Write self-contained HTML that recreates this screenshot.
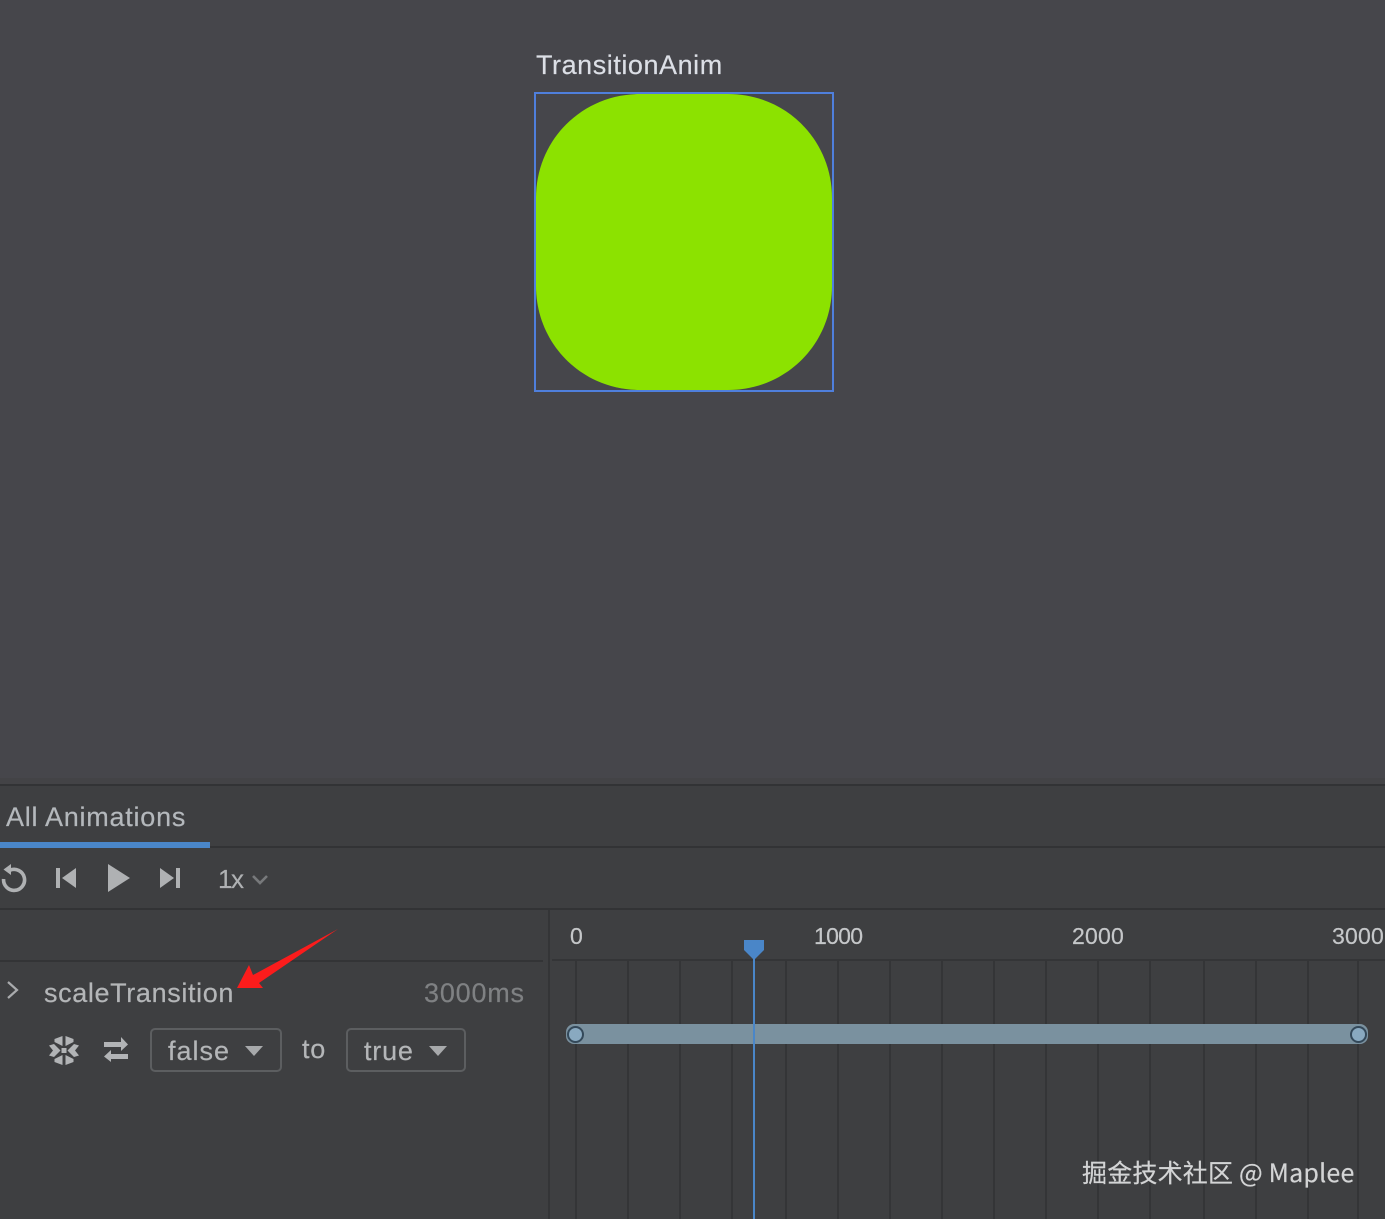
<!DOCTYPE html>
<html>
<head>
<meta charset="utf-8">
<style>
html,body{margin:0;padding:0;background:#46464b;}
#r{position:relative;width:1385px;height:1219px;overflow:hidden;background:#46464b;font-family:"Liberation Sans",sans-serif;}
.t{position:absolute;white-space:nowrap;line-height:1;-webkit-text-stroke:0.2px currentColor;}
.a{position:absolute;}
</style>
</head>
<body>
<div id="r">
  <div class="t" style="left:536px;top:52px;font-size:27px;letter-spacing:0.55px;color:#dcdfe6;">TransitionAnim</div>
  <div class="a" style="left:534px;top:92px;width:296px;height:296px;border:2px solid #4f7fdc;"></div>
  <svg class="a" style="left:534px;top:92px" width="300" height="300" viewBox="0 0 300 300">
    <path d="M2 106C2 48 48 2 106 2H194C252 2 298 48 298 106V194C298 252 252 298 194 298H106C48 298 2 252 2 194Z" fill="#8ce200"/>
  </svg>

  <div class="a" style="left:0;top:778px;width:1385px;height:441px;background:#3e3f41;"></div>
  <div class="a" style="left:0;top:778px;width:1385px;height:7px;background:#434346;"></div>
  <div class="a" style="left:0;top:784px;width:1385px;height:2px;background:#323335;"></div>
  <div class="a" style="left:0;top:846px;width:1385px;height:2px;background:#323335;"></div>
  <div class="a" style="left:0;top:842px;width:210px;height:6px;background:#4a86c8;"></div>
  <div class="a" style="left:0;top:908px;width:1385px;height:2px;background:#323335;"></div>
  <div class="a" style="left:548px;top:910px;width:2px;height:309px;background:#343537;"></div>
  <div class="a" style="left:0;top:960px;width:543px;height:2px;background:#333436;"></div>
  <div class="a" style="left:552px;top:959px;width:833px;height:2px;background:#343537;"></div>

  <div class="t" style="left:6px;top:804px;font-size:27px;letter-spacing:0.75px;color:#b4b8bc;">All Animations</div>

  <svg class="a" style="left:0;top:860px" width="280" height="40" viewBox="0 0 280 40">
    <path d="M10 10.200A10.500 10.500 0 1 1 3.600 19" fill="none" stroke="#afb1b3" stroke-width="3.600"/>
    <path d="M11 4V15L3.500 9.500Z" fill="#afb1b3"/>
    <rect x="56" y="8" width="4" height="20" fill="#afb1b3"/>
    <path d="M76 8V28L62 18Z" fill="#afb1b3"/>
    <path d="M108 4V32L130 18Z" fill="#afb1b3"/>
    <path d="M160 8V28L174 18Z" fill="#afb1b3"/>
    <rect x="176" y="8" width="4" height="20" fill="#afb1b3"/>
    <path d="M253 16L260 23L267 16" fill="none" stroke="#77797b" stroke-width="2.600"/>
  </svg>
  <div class="t" style="left:218px;top:866px;font-size:26px;letter-spacing:-1.500px;color:#afb1b3;">1x</div>

  <svg class="a" style="left:0;top:975px" width="30" height="30" viewBox="0 0 30 30">
    <path d="M8 7L17 15L8 23" fill="none" stroke="#a9abad" stroke-width="2.200"/>
  </svg>
  <div class="t" style="left:44px;top:980px;font-size:27px;letter-spacing:0.63px;color:#b4b6b8;">scaleTransition</div>
  <div class="t" style="left:424px;top:980px;font-size:27px;letter-spacing:0.8px;color:#7f8183;">3000ms</div>

  <svg class="a" style="left:40px;top:1025px" width="100" height="50" viewBox="0 0 100 50">
    <g fill="#b2b4b6">
      <rect x="21.500" y="23" width="5" height="5"/>
      <path d="M22.500 11V21L14.500 17V14Z"/>
      <path d="M25.500 11V21L33.500 17V14Z"/>
      <path d="M22.500 40V30L14.500 34V37Z"/>
      <path d="M25.500 40V30L33.500 34V37Z"/>
      <path d="M9 20.500L14 19L20.500 25.500L14 32L9 30.500L13 25.500Z"/>
      <path d="M39 20.500L34 19L27.500 25.500L34 32L39 30.500L35 25.500Z"/>
      <rect x="64" y="17" width="18" height="5"/>
      <path d="M81 12L88 19.500L81 26Z"/>
      <rect x="70" y="29" width="18" height="5"/>
      <path d="M71 25L64 31.500L71 37Z"/>
    </g>
  </svg>

  <div class="a" style="left:150px;top:1028px;width:128px;height:40px;border:2px solid #5c5e60;border-radius:5px;"></div>
  <div class="t" style="left:168px;top:1038px;font-size:27px;letter-spacing:1px;color:#b4b6b8;">false</div>
  <svg class="a" style="left:244px;top:1044px" width="20" height="14"><path d="M1 2H19L10 12Z" fill="#a7a9ab"/></svg>
  <div class="t" style="left:302px;top:1036px;font-size:27px;letter-spacing:0.8px;color:#b4b6b8;">to</div>
  <div class="a" style="left:346px;top:1028px;width:116px;height:40px;border:2px solid #5c5e60;border-radius:5px;"></div>
  <div class="t" style="left:364px;top:1038px;font-size:27px;letter-spacing:0.8px;color:#b4b6b8;">true</div>
  <svg class="a" style="left:428px;top:1044px" width="20" height="14"><path d="M1 2H19L10 12Z" fill="#a7a9ab"/></svg>

  <div class="t" style="left:570px;top:925px;font-size:23px;color:#c5c7c9;">0</div>
  <div class="t" style="left:814px;top:925px;font-size:23px;letter-spacing:-0.7px;color:#c5c7c9;">1000</div>
  <div class="t" style="left:1072px;top:925px;font-size:23px;letter-spacing:0.2px;color:#c5c7c9;">2000</div>
  <div class="t" style="left:1332px;top:925px;font-size:23px;letter-spacing:0.2px;color:#c5c7c9;">3000</div>

  <svg class="a" style="left:0;top:960px" width="1385" height="259" viewBox="0 0 1385 259">
    <g fill="#343537">
      <rect x="575" width="2" height="259"/><rect x="627" width="2" height="259"/>
      <rect x="679" width="2" height="259"/><rect x="731" width="2" height="259"/>
      <rect x="785" width="2" height="259"/><rect x="837" width="2" height="259"/>
      <rect x="889" width="2" height="259"/><rect x="941" width="2" height="259"/>
      <rect x="993" width="2" height="259"/><rect x="1045" width="2" height="259"/>
      <rect x="1097" width="2" height="259"/><rect x="1149" width="2" height="259"/>
      <rect x="1203" width="2" height="259"/><rect x="1255" width="2" height="259"/>
      <rect x="1307" width="2" height="259"/><rect x="1357" width="2" height="259"/>
    </g>
  </svg>

  <div class="a" style="left:566px;top:1024px;width:802px;height:20px;background:#7a919f;border-radius:8px;"></div>
  <div class="a" style="left:567px;top:1026px;width:13px;height:13px;border:2.500px solid #34495a;border-radius:50%;background:#89a9c0;"></div>
  <div class="a" style="left:1350px;top:1026px;width:13px;height:13px;border:2.500px solid #34495a;border-radius:50%;background:#89a9c0;"></div>

  <div class="a" style="left:753px;top:958px;width:2px;height:261px;background:#4a86c8;"></div>
  <svg class="a" style="left:744px;top:940px" width="20" height="20" viewBox="0 0 20 20"><path d="M0 0H20V10L10 20L0 10Z" fill="#4a86c8"/></svg>

  <svg class="a" style="left:230px;top:920px" width="120" height="80" viewBox="0 0 120 80">
    <path d="M7 68L19 45L23 55L108 9L29 63L33 68Z" fill="#fb1c1c"/>
  </svg>

  <div class="t" style="left:1082px;top:1160px;font-size:25px;color:#d3d4d5;font-family:'Noto Sans CJK SC','Liberation Sans',sans-serif;letter-spacing:0.2px;">掘金技术社区 @ Maplee</div>
</div>
</body>
</html>
